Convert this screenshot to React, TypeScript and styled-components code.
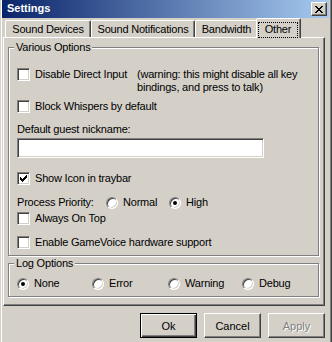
import styled, { createGlobalStyle } from "styled-components";

const GlobalStyle = createGlobalStyle`
  html, body {
    margin: 0;
    padding: 0;
    background: #d4d0c8;
  }
  body {
    font-family: "Liberation Sans", Arial, sans-serif;
    font-size: 11px;
    letter-spacing: -0.2px;
    color: #000;
  }
`

const Window = styled.div`
  box-sizing: border-box;
  width: 332px;
  height: 342px;
  background: #d4d0c8;
  border-left: 1px solid #d4d0c8;
  border-right: 1px solid #404040;
  padding: 0 2px 0 1px;
  box-shadow: inset 1px 0 #fff, inset -1px 0 #808080;
  display: flex;
  flex-direction: column;
`

const TitleBar = styled.div`
  height: 18px;
  display: flex;
  align-items: center;
  justify-content: space-between;
  padding: 0 2px 0 5px;
  background: linear-gradient(to right, #0a246a, #a6caf0);
`

const Title = styled.span`
  color: #fff;
  font-weight: bold;
  letter-spacing: 0;
  line-height: 13px;
  padding-bottom: 2px;
`

const CloseButton = styled.span`
  box-sizing: border-box;
  width: 16px;
  height: 14px;
  background: #d4d0c8;
  border: 1px solid;
  border-color: #fff #404040 #404040 #fff;
  box-shadow: inset -1px -1px #808080;
  display: flex;
  align-items: center;
  justify-content: center;
  padding-right: 1px;
`

const TabStrip = styled.div`
  display: flex;
  align-items: flex-end;
  height: 19px;
  padding-left: 3px;
`

const Tab = styled.div<{ $w: number; $active?: boolean }>`
  box-sizing: border-box;
  position: relative;
  z-index: ${(p) => (p.$active ? 2 : 0)};
  width: ${(p) => p.$w + (p.$active ? 4 : 0)}px;
  height: ${(p) => (p.$active ? 20 : 17)}px;
  margin: ${(p) => (p.$active ? "0 -2px -1px" : "0")};
  padding-top: ${(p) => (p.$active ? 0 : 2)}px;
  background: #d4d0c8;
  border-top: 1px solid #fff;
  border-left: 1px solid #fff;
  border-right: 1px solid #404040;
  border-radius: 2px 2px 0 0;
  box-shadow: inset -1px 0 #808080;
  text-align: center;
  line-height: 13px;
  white-space: nowrap;
`

const FocusRing = styled.div`
  box-sizing: border-box;
  height: 16px;
  margin: 3px 2px 0 1px;
  border: 1px dotted #000;
`

const Panel = styled.div`
  box-sizing: border-box;
  width: 322px;
  height: 269px;
  margin-left: 1px;
  border: 1px solid;
  border-color: #fff #404040 #404040 #fff;
  box-shadow: inset -1px -1px #808080;
  padding: 0 5px 0 4px;
  display: flow-root;
`

const GroupBox = styled.div<{ $mt: number }>`
  margin-top: ${(p) => p.$mt}px;
  border: 1px solid #808080;
  box-shadow: inset 1px 1px #fff, 1px 1px #fff;
  padding: 0 8px 6px 8px;
`

const GroupTitle = styled.div`
  width: fit-content;
  margin: -7px 0 0 -3px;
  padding: 0 2px;
  background: #d4d0c8;
  line-height: 13px;
`

const Row = styled.div<{ $mt: number }>`
  display: flex;
  align-items: flex-start;
  margin-top: ${(p) => p.$mt}px;
  line-height: 13px;
  white-space: nowrap;
`

const CheckBox = styled.span`
  box-sizing: border-box;
  flex: none;
  width: 13px;
  height: 13px;
  margin-right: 5px;
  background: #fff;
  border: 1px solid;
  border-color: #808080 #fff #fff #808080;
  box-shadow: inset 1px 1px #404040, inset -1px -1px #d4d0c8;
  display: flex;
  align-items: center;
  justify-content: center;
`

const RadioButton = styled.span<{ $on?: boolean }>`
  box-sizing: border-box;
  flex: none;
  width: 12px;
  height: 12px;
  margin: 1px 5px 0 0;
  border-radius: 50%;
  background: #fff;
  border: 1px solid;
  border-color: #808080 #fff #fff #808080;
  box-shadow: inset 1px 1px #404040, inset -1px -1px #d4d0c8;
  display: flex;
  align-items: center;
  justify-content: center;

  &::after {
    content: "";
    width: 4px;
    height: 4px;
    border-radius: 50%;
    background: ${(p) => (p.$on ? "#000" : "transparent")};
  }
`

const Option = styled.span<{ $w?: number }>`
  display: flex;
  align-items: flex-start;
  flex: none;
  width: ${(p) => (p.$w ? `${p.$w}px` : "auto")};
`

const Caption = styled.span<{ $w: number }>`
  flex: none;
  width: ${(p) => p.$w}px;
`

const Warning = styled.span`
  white-space: nowrap;
`

const TextInput = styled.input`
  box-sizing: border-box;
  display: block;
  width: 247px;
  height: 20px;
  margin: 2px 0 0;
  padding: 0 3px;
  font: inherit;
  background: #fff;
  border: 1px solid;
  border-color: #808080 #fff #fff #808080;
  box-shadow: inset 1px 1px #404040, inset -1px -1px #d4d0c8;
  outline: none;
`

const ButtonRow = styled.div`
  display: flex;
  justify-content: flex-end;
  gap: 7px;
  margin-top: 7px;
  padding-right: 4px;
`

const Button = styled.button<{ $default?: boolean }>`
  box-sizing: border-box;
  width: 57px;
  height: 25px;
  padding: 0;
  font-family: "Liberation Sans", Arial, sans-serif;
  font-size: 11px;
  color: #000;
  background: #d4d0c8;
  border: 1px solid;
  border-color: ${(p) => (p.$default ? "#000" : "#fff #404040 #404040 #fff")};
  box-shadow: ${(p) =>
    p.$default
      ? "inset 1px 1px #fff, inset -1px -1px #404040, inset -2px -2px #808080"
      : "inset -1px -1px #808080"};

  &:disabled {
    color: #808080;
    text-shadow: 1px 1px #fff;
  }
`

const CheckMark = () => (
  <svg width="7" height="7" viewBox="0 0 7 7" shapeRendering="crispEdges">
    <path d="M0 2h1v3H0z M1 3h1v3H1z M2 4h1v3H2z M3 3h1v3H3z M4 2h1v3H4z M5 1h1v3H5z M6 0h1v3H6z" fill="#000" />
  </svg>
)

const CloseGlyph = () => (
  <svg width="8" height="7" viewBox="0 0 8 7" shapeRendering="crispEdges">
    <path
      d="M0 0h2v1H0z M6 0h2v1H6z M1 1h2v1H1z M5 1h2v1H5z M2 2h4v1H2z M3 3h2v1H3z M2 4h4v1H2z M1 5h2v1H1z M5 5h2v1H5z M0 6h2v1H0z M6 6h2v1H6z"
      fill="#000"
    />
  </svg>
)

const Check = ({ label, checked }: { label: string; checked?: boolean }) => (
  <>
    <CheckBox>{checked && <CheckMark />}</CheckBox>
    <span>{label}</span>
  </>
)

const Radio = ({ label, on, w }: { label: string; on?: boolean; w?: number }) => (
  <Option $w={w}>
    <RadioButton $on={on} />
    <span>{label}</span>
  </Option>
)

export default function App() {
  return (
    <>
      <GlobalStyle />
      <Window>
        <TitleBar>
          <Title>Settings</Title>
          <CloseButton>
            <CloseGlyph />
          </CloseButton>
        </TitleBar>

        <TabStrip>
          <Tab $w={86}>Sound Devices</Tab>
          <Tab $w={104}>Sound Notifications</Tab>
          <Tab $w={63}>Bandwidth</Tab>
          <Tab $w={41} $active>
            <FocusRing>Other</FocusRing>
          </Tab>
        </TabStrip>

        <Panel>
          <GroupBox $mt={9}>
            <GroupTitle>Various Options</GroupTitle>
            <Row $mt={14}>
              <CheckBox />
              <Caption $w={102}>Disable Direct Input</Caption>
              <Warning>
                (warning: this might disable all key
                <br />
                bindings, and press to talk)
              </Warning>
            </Row>
            <Row $mt={6}>
              <Check label="Block Whispers by default" />
            </Row>
            <Row $mt={10}>Default guest nickname:</Row>
            <TextInput type="text" defaultValue="" />
            <Row $mt={14}>
              <Check label="Show Icon in traybar" checked />
            </Row>
            <Row $mt={11}>
              <Caption $w={89}>Process Priority:</Caption>
              <Radio label="Normal" w={63} />
              <Radio label="High" on />
            </Row>
            <Row $mt={3}>
              <Check label="Always On Top" />
            </Row>
            <Row $mt={11}>
              <Check label="Enable GameVoice hardware support" />
            </Row>
          </GroupBox>

          <GroupBox $mt={7}>
            <GroupTitle>Log Options</GroupTitle>
            <Row $mt={7}>
              <Radio label="None" on w={75} />
              <Radio label="Error" w={76} />
              <Radio label="Warning" w={74} />
              <Radio label="Debug" />
            </Row>
          </GroupBox>
        </Panel>

        <ButtonRow>
          <Button $default>Ok</Button>
          <Button>Cancel</Button>
          <Button disabled>Apply</Button>
        </ButtonRow>
      </Window>
    </>
  )
}
